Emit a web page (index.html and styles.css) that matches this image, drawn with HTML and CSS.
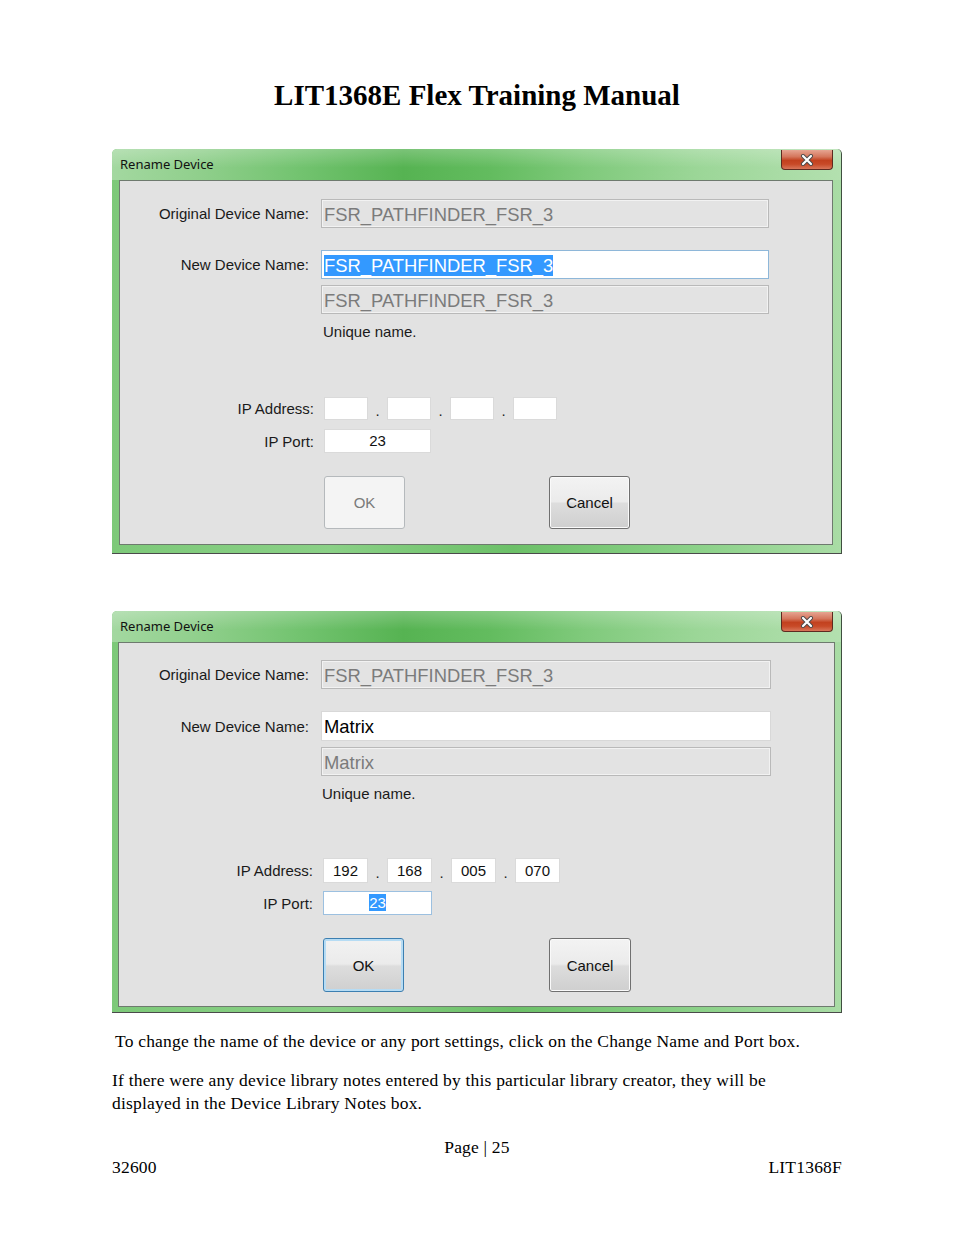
FILE: index.html
```html
<!DOCTYPE html>
<html>
<head>
<meta charset="utf-8">
<title>LIT1368E Flex Training Manual</title>
<link rel="stylesheet" href="styles.css">
</head>
<body>
<div class="page">
  <h1 class="doc-title">LIT1368E Flex Training Manual</h1>

  <div class="dialog d1">
    <div class="titlebar">
      <span class="wtitle">Rename Device</span>
      <div class="close"><svg width="16" height="12" viewBox="0 0 16 12"><path d="M4 2 L12 10 M12 2 L4 10" stroke="#4a4a4a" stroke-width="4" stroke-linecap="round"/><path d="M4 2 L12 10 M12 2 L4 10" stroke="#ffffff" stroke-width="2.2" stroke-linecap="round"/></svg></div>
    </div>
    <div class="panel">
      <div class="row r1"><span class="label">Original Device Name:</span><div class="field ro">FSR_PATHFINDER_FSR_3</div></div>
      <div class="row r2"><span class="label">New Device Name:</span><div class="field edit focus"><span class="sel">FSR_PATHFINDER_FSR_3</span></div></div>
      <div class="row r3"><span class="label"></span><div class="field ro">FSR_PATHFINDER_FSR_3</div></div>
      <div class="unique">Unique name.</div>
      <div class="row ip"><span class="label ilabel">IP Address:</span>
        <div class="octet"></div><span class="dot">.</span><div class="octet"></div><span class="dot">.</span><div class="octet"></div><span class="dot">.</span><div class="octet"></div>
      </div>
      <div class="row port"><span class="label ilabel">IP Port:</span><div class="portbox">23</div></div>
      <div class="btnrow"><div class="btn ok disabled">OK</div><div class="btn cancel">Cancel</div></div>
    </div>
  </div>

  <div class="dialog d2">
    <div class="titlebar">
      <span class="wtitle">Rename Device</span>
      <div class="close"><svg width="16" height="12" viewBox="0 0 16 12"><path d="M4 2 L12 10 M12 2 L4 10" stroke="#4a4a4a" stroke-width="4" stroke-linecap="round"/><path d="M4 2 L12 10 M12 2 L4 10" stroke="#ffffff" stroke-width="2.2" stroke-linecap="round"/></svg></div>
    </div>
    <div class="panel">
      <div class="row r1"><span class="label">Original Device Name:</span><div class="field ro">FSR_PATHFINDER_FSR_3</div></div>
      <div class="row r2"><span class="label">New Device Name:</span><div class="field edit">Matrix</div></div>
      <div class="row r3"><span class="label"></span><div class="field ro">Matrix</div></div>
      <div class="unique">Unique name.</div>
      <div class="row ip"><span class="label ilabel">IP Address:</span>
        <div class="octet">192</div><span class="dot">.</span><div class="octet">168</div><span class="dot">.</span><div class="octet">005</div><span class="dot">.</span><div class="octet">070</div>
      </div>
      <div class="row port"><span class="label ilabel">IP Port:</span><div class="portbox focus"><span class="sel">23</span></div></div>
      <div class="btnrow"><div class="btn ok default">OK</div><div class="btn cancel">Cancel</div></div>
    </div>
  </div>

  <p class="para p1">To change the name of the device or any port settings, click on the Change Name and Port box.</p>
  <p class="para p2">If there were any device library notes entered by this particular library creator, they will be displayed in the Device Library Notes box.</p>

  <div class="pagenum">Page | 25</div>
  <div class="footer"><span>32600</span><span>LIT1368F</span></div>
</div>
</body>
</html>
```

FILE: styles.css
```css
html, body {
  margin: 0;
  padding: 0;
  background: #ffffff;
}

.page {
  width: 954px;
  box-sizing: border-box;
  padding: 78px 112px 0 112px;
  font-family: "Liberation Serif", "DejaVu Serif", serif;
  color: #000;
}

.doc-title {
  margin: 0;
  text-align: center;
  font-size: 29px;
  line-height: 34px;
  font-weight: bold;
  font-family: "Liberation Serif", serif;
}

/* ---------- window ---------- */
.dialog {
  width: 730px;
  box-sizing: border-box;
  border-radius: 5px 5px 0 0;
  background: linear-gradient(90deg, #7dc979 0%, #8ad086 30%, #6cc068 55%, #8bd188 80%, #a9dca5 100%);
  border-right: 1px solid #3f4f3f;
  border-bottom: 1px solid #4a4a4a;
  font-family: "Liberation Sans", Arial, sans-serif;
  color: #1a1a1a;
}

.d1 { margin-top: 37px; }
.d2 { margin-top: 57px; }

.titlebar {
  height: 31px;
  display: flex;
  align-items: flex-start;
  justify-content: space-between;
  border-radius: 5px 5px 0 0;
  background:
    linear-gradient(180deg, rgba(255,255,255,0.22) 0%, rgba(255,255,255,0) 60%),
    linear-gradient(90deg, #a3d8a0 0%, #90cf8c 12%, #74c471 25%, #56b352 40%, #63bc5f 52%, #80ca7c 65%, #9bd697 80%, #b3e0af 100%);
}

.wtitle {
  font-family: "Noto Sans", "Open Sans", sans-serif;
  font-size: 13px;
  line-height: 31px;
  color: #111;
  padding-left: 8px;
}

.close {
  width: 52px;
  height: 20px;
  margin-top: 1px;
  margin-right: 8px;
  box-sizing: border-box;
  border: 1px solid #5e2a20;
  border-top: none;
  border-radius: 0 0 4px 4px;
  background: linear-gradient(180deg, #e6a592 0%, #d5775d 35%, #c2411f 55%, #c84a28 75%, #d8765a 100%);
  display: flex;
  align-items: center;
  justify-content: center;
}

.panel {
  margin: 0 8px 8px 7px;
  height: 365px;
  box-sizing: border-box;
  border: 1px solid #6e7a6e;
  background: #e2e2e2;
  padding-top: 18px;
}

.d2 .panel {
  margin: 0 6px 5px 6px;
  height: 365px;
  padding-top: 17px;
}

.row {
  display: flex;
  align-items: center;
}

.label {
  width: 189px;
  margin-right: 12px;
  text-align: right;
  font-size: 15px;
  color: #1a1a1a;
  white-space: nowrap;
}

.ilabel {
  width: 194px;
  margin-right: 10px;
}

.d2 .label { width: 190px; }
.d2 .ilabel { width: 194px; margin-right: 10px; }

.field {
  width: 448px;
  height: 29px;
  box-sizing: border-box;
  font-size: 18.4px;
  line-height: 29px;
  padding-left: 2px;
  white-space: nowrap;
}

.d2 .field { width: 450px; }

.field.ro {
  background: #e3e3e3;
  border: 1px solid #b9b9b9;
  box-shadow: inset 0 0 0 1px #f2f2f2;
  color: #7b7b7b;
}

.field.edit {
  background: #ffffff;
  border: 1px solid #d8d8d8;
  color: #000;
}

.field.edit.focus {
  border-color: #8eb7d9;
}

.d2 .field.edit { height: 30px; line-height: 30px; }

.sel {
  background: #3399ff;
  color: #ffffff;
}

.r2 { margin-top: 22px; }
.r3 { margin-top: 6px; }

.unique {
  margin: 9px 0 0 203px;
  font-size: 15px;
  line-height: 17px;
  color: #1a1a1a;
}

.ip { margin-top: 55px; }

.octet {
  width: 44px;
  height: 23px;
  box-sizing: border-box;
  background: #ffffff;
  border: 1px solid #dadada;
  font-size: 15px;
  line-height: 21px;
  text-align: center;
  color: #111;
}

.d2 .octet { height: 25px; line-height: 23px; width: 45px; }

.dot {
  width: 19px;
  text-align: center;
  font-size: 15px;
  line-height: 23px;
  padding-top: 4px;
  color: #222;
}

.port { margin-top: 7px; }
.d2 .port { margin-top: 7px; }

.portbox {
  width: 107px;
  height: 24px;
  box-sizing: border-box;
  background: #ffffff;
  border: 1px solid #dadada;
  font-size: 15px;
  line-height: 22px;
  text-align: center;
  color: #111;
}

.d2 .portbox { width: 109px; }

.portbox.focus { border-color: #9cc0e0; }

.btnrow {
  display: flex;
  margin: 23px 0 0 204px;
  gap: 144px;
}

.d2 .btnrow { gap: 145px; }

.btn {
  width: 81px;
  height: 53px;
  box-sizing: border-box;
  border-radius: 3px;
  font-size: 15px;
  display: flex;
  align-items: center;
  justify-content: center;
}

.d2 .btn { height: 54px; }
.d2 .cancel { width: 82px; }

.btn.disabled {
  background: #f4f4f4;
  border: 1px solid #b5b9bc;
  color: #7a7a7a;
}

.btn.cancel {
  background: linear-gradient(180deg, #f3f3f3 0%, #ebebeb 48%, #dddddd 52%, #cfcfcf 100%);
  border: 1px solid #707070;
  box-shadow: inset 0 0 0 1px #fafafa;
  color: #111;
}

.btn.default {
  background: linear-gradient(180deg, #f2f2f2 0%, #ebebeb 48%, #dddddd 52%, #cfcfcf 100%);
  border: 1px solid #3c7fb1;
  box-shadow: inset 0 0 0 2px #b6dcf4;
  color: #111;
}

/* ---------- text ---------- */
.para {
  margin: 0;
  font-size: 17.5px;
  letter-spacing: 0.2px;
  line-height: 23px;
}

.p1 { margin-top: 17px; padding-left: 3px; }
.p2 { margin-top: 16px; max-width: 700px; }

.pagenum {
  margin-top: 22px;
  text-align: center;
  font-size: 17.5px;
  letter-spacing: 0.2px;
  line-height: 20px;
}

.footer {
  display: flex;
  justify-content: space-between;
  font-size: 17.5px;
  letter-spacing: 0.2px;
  line-height: 20px;
}
```
